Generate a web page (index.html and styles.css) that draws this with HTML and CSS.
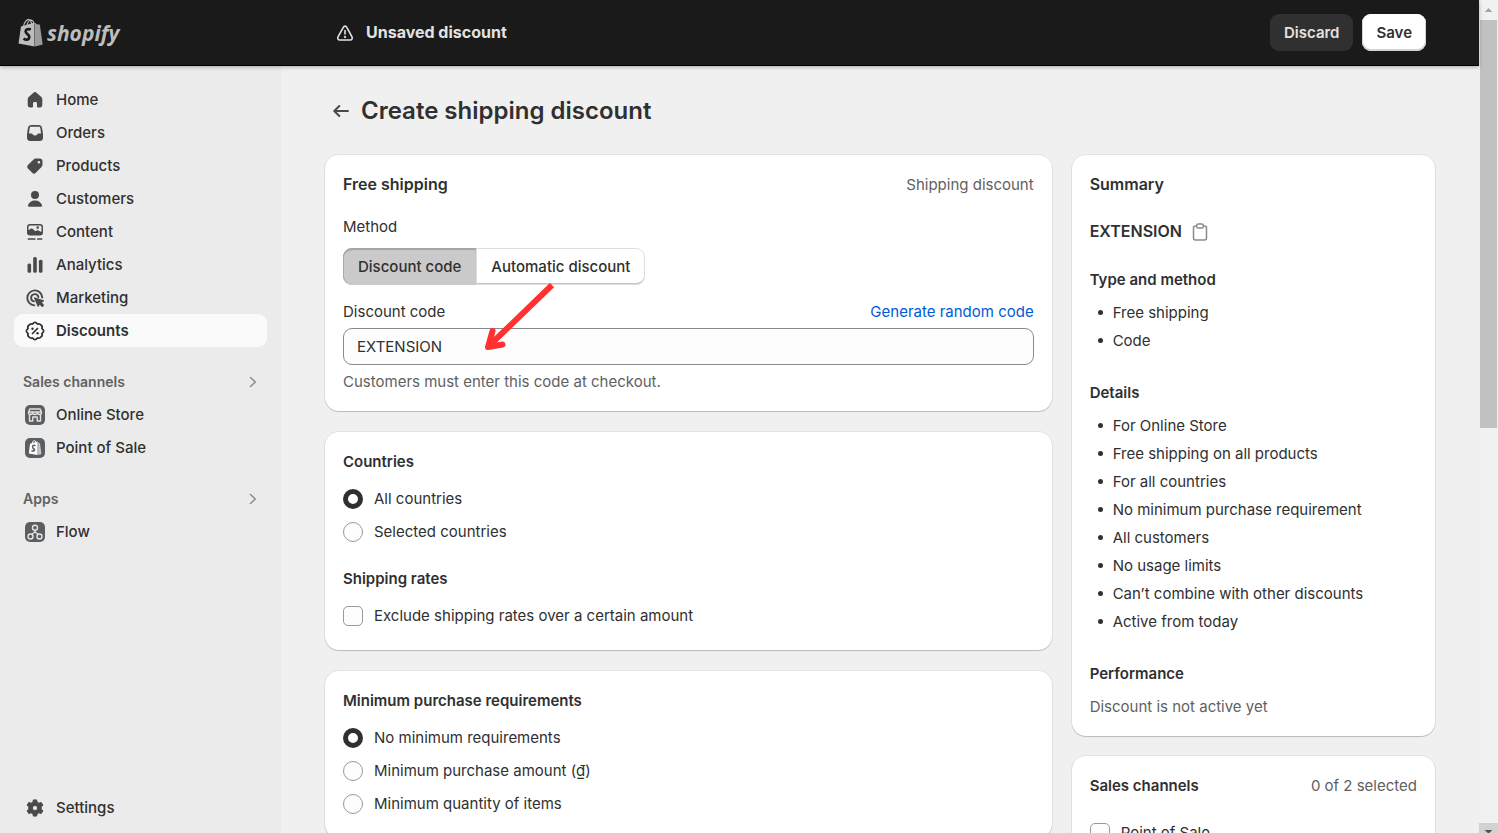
FILE: index.html
```html
<!DOCTYPE html>
<html lang="en">
<head>
<meta charset="utf-8">
<title>Create shipping discount</title>
<link rel="stylesheet" href="styles.css">
</head>
<body>
<div class="app">
  <header class="topbar">
    <a class="logo" href="#" aria-label="Shopify">
      <svg class="logo-bag" viewBox="0 0 25 29" aria-hidden="true">
        <path d="M5.500 8.500C6.200 4 9 1.200 11 1.500C12.800 1.800 13.500 4 13.500 7M9 7.500C9.500 4 11.500 2 13.200 2.200C15 2.500 15.800 4.500 16 6.500" fill="none" stroke="#bdbdbd" stroke-width="1.200"/>
        <path d="M3 8.600L16.500 4.600V28.500L.5 25.500Z" fill="#bdbdbd"/>
        <path d="M17 4.800L18.800 6.200L21.800 6.600L24.700 26.600L17 28.500Z" fill="#9c9c9c"/>
        <path d="M12.800 11.600C10.500 10.400 7.600 11.200 7.600 13.600C7.600 16.200 11.600 16.200 11.300 19.200C11 22 7.800 22.300 5.600 20.400" fill="none" stroke="#1a1a1a" stroke-width="2.700"/>
      </svg>
      <span>shopify</span>
    </a>
    <div class="save-bar">
      <div class="save-status">
        <svg class="warn" viewBox="0 0 18 18" fill="none" stroke="#e3e3e3" stroke-width="1.600" stroke-linecap="round" stroke-linejoin="round" aria-hidden="true"><path d="M7.300 3.300C8 1.700 10 1.700 10.800 3.300L16 12.800C16.700 14.500 15.900 16 14.200 16H3.800C2.100 16 1.300 14.500 2 12.800ZM9 6.500V10"/><circle cx="9" cy="12.900" r=".4"/></svg>
        <span>Unsaved discount</span>
      </div>
      <div class="save-actions">
        <button class="btn-dark" type="button">Discard</button>
        <button class="btn-light" type="button">Save</button>
      </div>
    </div>
  </header>

  <div class="body">
    <nav class="sidebar" aria-label="Main">
      <a class="nav-item" href="#"><svg class="ico" viewBox="0 0 20 20"><path d="M8.700 2.600Q10 1.500 11.300 2.600L16.300 7Q17.300 8 17.300 9.300V15.300Q17.300 17.400 15.200 17.400H13Q12 17.400 12 16.400V13.500Q12 12 10.900 12H9.100Q8 12 8 13.500V16.400Q8 17.400 7 17.400H4.800Q2.700 17.400 2.700 15.300V9.300Q2.700 8 3.700 7Z"/></svg>Home</a>
      <a class="nav-item" href="#"><svg class="ico" viewBox="0 0 20 20"><path fill-rule="evenodd" d="M6 2H14Q16.500 2 17 4.500L18 11V14.500Q18 18 14.500 18H5.500Q2 18 2 14.500V11L3 4.500Q3.500 2 6 2ZM6 3.700Q4.900 3.700 4.700 4.800L4 10.500H6.500Q7.300 10.500 7.800 11.400Q8.300 12.500 10 12.500T12.200 11.400Q12.700 10.500 13.500 10.500H16L15.300 4.800Q15.100 3.700 14 3.700Z"/></svg>Orders</a>
      <a class="nav-item" href="#"><svg class="ico" viewBox="0 0 20 20"><path fill-rule="evenodd" d="M10.600 2.500H14.500Q17.500 2.500 17.500 5.500V8.600Q17.500 9.800 16.500 10.900L10.800 16.800Q9 18.500 7.200 16.800L2.900 12.600Q1.300 10.800 2.900 9L8.600 3.400Q9.500 2.500 10.600 2.500ZM13.900 4.900A1.300 1.300 0 1 0 13.900 7.500A1.300 1.300 0 1 0 13.900 4.900Z"/></svg>Products</a>
      <a class="nav-item" href="#"><svg class="ico" viewBox="0 0 20 20"><circle cx="10" cy="6" r="4"/><path d="M10 11.500C13.800 11.500 16.300 13.600 17 16.300Q17.200 17.700 16 17.700H4Q2.800 17.700 3 16.300C3.700 13.600 6.200 11.500 10 11.500Z"/></svg>Customers</a>
      <a class="nav-item" href="#"><svg class="ico" viewBox="0 0 20 20"><path fill-rule="evenodd" d="M5 2H15Q18 2 18 5V10.500Q18 13.500 15 13.500H5Q2 13.500 2 10.500V5Q2 2 5 2ZM5 3.500Q3.500 3.500 3.500 5V8.300L5.600 6.700Q6.800 6 7.900 6.900L10.300 9.300L11.600 8.500Q12.800 7.800 13.900 8.700L16.500 10V5Q16.500 3.500 15 3.500ZM12.700 4.300A1.300 1.300 0 1 1 12.700 6.900A1.300 1.300 0 1 1 12.700 4.300Z"/><path d="M3.500 17H9.800M12.800 17H16.600" stroke="currentColor" stroke-width="1.700" stroke-linecap="round"/></svg>Content</a>
      <a class="nav-item" href="#"><svg class="ico" viewBox="0 0 20 20"><rect x="2.500" y="8.500" width="3.600" height="9.200" rx="1.500"/><rect x="8.200" y="2" width="3.600" height="15.700" rx="1.500"/><rect x="13.900" y="4.800" width="3.600" height="12.900" rx="1.500"/></svg>Analytics</a>
      <a class="nav-item" href="#"><svg class="ico" viewBox="0 0 20 20"><path d="M17.300 9.500A7.500 7.500 0 1 0 9.300 17.400M13.400 9A3.700 3.700 0 1 0 9 13.400" fill="none" stroke="currentColor" stroke-width="1.900" stroke-linecap="round"/><path d="M9.500 9.200L18.700 12.300Q19.600 12.900 18.600 13.500L16.900 14.400L18.900 16.700Q19.200 17.800 17.800 18.900Q17.100 19.300 16.500 18.600L14.700 16.700L13.700 18.500Q13 19.300 12.500 18.300L9 10Q8.900 9.200 9.500 9.200Z"/></svg>Marketing</a>
      <a class="nav-item active" href="#" aria-current="page"><svg class="ico" viewBox="0 0 20 20"><path d="M10 1.300Q11.200 1.300 12.400 3Q14.900 2.300 15.900 4.100Q17.700 5.100 17 7.600Q18.700 8.800 18.700 10T17 12.400Q17.700 14.900 15.900 15.900Q14.900 17.700 12.400 17Q11.200 18.700 10 18.700T7.600 17Q5.100 17.700 4.100 15.900Q2.300 14.900 3 12.400Q1.300 11.200 1.300 10T3 7.600Q2.300 5.100 4.100 4.100Q5.100 2.300 7.600 3Q8.800 1.300 10 1.300ZM7.500 12.500L12.500 7.500" fill="none" stroke="currentColor" stroke-width="1.700" stroke-linecap="round"/><circle cx="7.500" cy="7.700" r="1.200"/><circle cx="12.500" cy="12.300" r="1.200"/></svg>Discounts</a>

      <a class="nav-heading" href="#">Sales channels<svg class="chev" viewBox="0 0 8 12"><path d="M1.500 1.500L6.300 6L1.500 10.500"/></svg></a>
      <a class="nav-item" href="#"><svg class="ico" viewBox="0 0 20 20"><rect width="20" height="20" rx="5" fill="#5c5f62"/><path d="M4.500 9.500V16H7.800V12H12.200V16H15.500V9.500M4.800 4H15.200L16.500 7.500Q16.500 9.500 14.700 9.500T12.500 8Q12 9.500 10 9.500T7.500 8Q7 9.500 5.300 9.500T3.500 7.500ZM3.700 7H16.300" fill="none" stroke="#e3e3e3" stroke-width="1.400" stroke-linejoin="round"/></svg>Online Store</a>
      <a class="nav-item" href="#"><svg class="ico" viewBox="0 0 20 20"><rect width="20" height="20" rx="5" fill="#5c5f62"/><path d="M5 5.800L12.600 3.500V17L3.800 15.600Z" fill="#fff"/><path d="M13.200 4L15 5.500L16.400 16L13.200 17Z" fill="#c9cacb"/><path d="M7 5.500Q8 2.500 9.500 2.700T11 4.500" fill="none" stroke="#fff"/><path d="M10.500 7.700Q7.500 6.700 7.500 8.500T9.600 11.500Q9.500 13.800 6.400 12.700" fill="none" stroke="#5c5f62" stroke-width="1.500"/></svg>Point of Sale</a>

      <a class="nav-heading" href="#">Apps<svg class="chev" viewBox="0 0 8 12"><path d="M1.500 1.500L6.300 6L1.500 10.500"/></svg></a>
      <a class="nav-item" href="#"><svg class="ico" viewBox="0 0 20 20"><rect width="20" height="20" rx="5" fill="#5c5f62"/><g fill="none" stroke="#e3e3e3" stroke-width="1.400"><circle cx="10" cy="5.700" r="2.500"/><circle cx="5.500" cy="14.500" r="2.500"/><circle cx="14.500" cy="14.500" r="2.500"/><path d="M10 8.200V10L6.800 12.300M10 10L13.200 12.300"/></g></svg>Flow</a>

      <a class="nav-item settings" href="#"><svg class="ico" viewBox="0 0 20 20"><path fill-rule="evenodd" d="M8.400 1.900H11.600L12.100 4.200L13.900 5.200L16.200 4.400L17.900 7.200L16.200 8.900V11.100L17.900 12.800L16.200 15.600L13.900 14.800L12.100 15.800L11.600 18.100H8.400L7.900 15.800L6.100 14.800L3.800 15.600L2.100 12.800L3.800 11.100V8.900L2.100 7.200L3.800 4.400L6.100 5.200L7.900 4.200ZM10 7.400A2.600 2.600 0 1 0 10 12.600A2.600 2.600 0 1 0 10 7.400Z" stroke="currentColor" stroke-linejoin="round"/></svg>Settings</a>
    </nav>

    <main class="main">
      <div class="page-title">
        <a class="back" href="#" aria-label="Back"><svg viewBox="0 0 16 14"><path d="M15 7H1.500M6.300 2L1.300 7L6.300 12"/></svg></a>
        <h1>Create shipping discount</h1>
      </div>

      <div class="columns">
        <form class="column form-column">
          <section class="card">
            <div class="card-head"><h2 class="lead">Free shipping</h2><span class="muted">Shipping discount</span></div>
            <div class="method">Method</div>
            <div class="segmented">
              <button class="pressed" type="button" aria-pressed="true">Discount code</button>
              <button type="button" aria-pressed="false">Automatic discount</button>
            </div>
            <div class="label-row">
              <label for="code">Discount code</label>
              <a class="link" href="#">Generate random code</a>
            </div>
            <input class="text-input" id="code" type="text" value="EXTENSION">
            <p class="help muted">Customers must enter this code at checkout.</p>
            <svg class="pointer" viewBox="0 0 72 70" aria-hidden="true"><path d="M68 2L7 61" fill="none" stroke="#ff3131" stroke-width="6"/><path d="M8.500 48L4 64L18.500 61.500" fill="none" stroke="#ff3131" stroke-width="6" stroke-linecap="round" stroke-linejoin="round"/></svg>
          </section>

          <section class="card">
            <h2>Countries</h2>
            <div class="choices">
              <label class="choice"><input type="radio" name="country" checked>All countries</label>
              <label class="choice"><input type="radio" name="country">Selected countries</label>
            </div>
            <h3 class="rates">Shipping rates</h3>
            <div class="choices">
              <label class="choice"><input type="checkbox">Exclude shipping rates over a certain amount</label>
            </div>
          </section>

          <section class="card">
            <h2>Minimum purchase requirements</h2>
            <div class="choices">
              <label class="choice"><input type="radio" name="minimum" checked>No minimum requirements</label>
              <label class="choice"><input type="radio" name="minimum">Minimum purchase amount (₫)</label>
              <label class="choice"><input type="radio" name="minimum">Minimum quantity of items</label>
            </div>
          </section>
        </form>

        <aside class="column">
          <section class="card">
            <h2 class="lead">Summary</h2>
            <div class="code-line"><strong>EXTENSION</strong>
              <button class="copy" type="button" aria-label="Copy code"><svg viewBox="0 0 16 18"><rect x="1.500" y="3" width="13" height="14" rx="2"/><rect x="4.700" y="1" width="6.600" height="4" rx="1.600" fill="#fff"/></svg></button>
            </div>
            <h3>Type and method</h3>
            <ul class="bullets"><li>Free shipping</li><li>Code</li></ul>
            <h3>Details</h3>
            <ul class="bullets">
              <li>For Online Store</li><li>Free shipping on all products</li><li>For all countries</li><li>No minimum purchase requirement</li><li>All customers</li><li>No usage limits</li><li>Can’t combine with other discounts</li><li>Active from today</li>
            </ul>
            <h3>Performance</h3>
            <p class="status muted">Discount is not active yet</p>
          </section>
          <section class="card">
            <div class="card-head"><h2>Sales channels</h2><span class="muted">0 of 2 selected</span></div>
            <div class="channels"><label class="choice"><input type="checkbox">Point of Sale</label></div>
          </section>
        </aside>
      </div>
    </main>
  </div>
</div>
<div class="scrollbar" aria-hidden="true">
  <svg class="scroll-up" viewBox="0 0 20 20"><path d="M6 12L10 8L14 12Z" fill="#a3a3a3"/></svg>
  <div class="thumb"></div>
  <svg class="scroll-down" viewBox="0 0 20 10"><path d="M6 7H14L10 11Z" fill="#505050"/></svg>
</div>
</body>
</html>
```
FILE: styles.css
```css
* { box-sizing: border-box; }
body {
  margin: 0;
  height: 100vh;
  overflow: hidden;
  display: flex;
  background: #f0f0f0;
  color: #303030;
  font: 15px/23px Inter, "Liberation Sans", sans-serif;
}
a { color: inherit; text-decoration: none; }
button, input { font: inherit; color: inherit; margin: 0; }
h1, h2, h3, p, ul { margin: 0; padding: 0; }
h2, h3 { font-size: 15px; line-height: 23px; font-weight: 600; }
.lead { font-size: 16px; }
.muted { color: #616161; }

.app { flex: 1; min-width: 0; display: flex; flex-direction: column; }

.topbar {
  position: relative;
  flex: none;
  height: 66px;
  display: flex;
  align-items: center;
  background: #1a1a1a;
  border-bottom: 1px solid #000;
  box-shadow: 0 1px 4px rgba(0, 0, 0, .3);
}
.logo {
  width: 281px;
  padding-left: 18px;
  display: flex;
  align-items: center;
  gap: 4px;
  color: #bdbdbd;
  font: italic 700 21px/30px "Open Sans", "Noto Sans", sans-serif;
}
.logo-bag { width: 25px; height: 29px; }
.save-bar {
  flex: 1;
  display: flex;
  align-items: center;
  justify-content: space-between;
  padding: 0 53px 0 55px;
}
.save-status { display: flex; align-items: center; gap: 12px; color: #e3e3e3; font-size: 16px; font-weight: 700; }
.warn { width: 18px; height: 18px; }
.save-actions { display: flex; gap: 9px; }
.save-actions button { height: 37px; padding: 0 14px; border: 0; border-radius: 9px; font-weight: 600; }
.btn-dark { background: #303030; color: #e3e3e3; }
.btn-light { background: #fff; box-shadow: inset 0 -1px 0 1px #d4d4d4, inset 0 1px 0 #fff; }

.body { flex: 1; min-height: 0; display: flex; }
.sidebar {
  flex: none;
  width: 281px;
  padding: 17px 14px 9px;
  display: flex;
  flex-direction: column;
  background: #ebebeb;
}
.nav-item {
  height: 33px;
  padding: 0 11px;
  display: flex;
  align-items: center;
  gap: 11px;
  border-radius: 9px;
  font-weight: 500;
}
.nav-item.active { background: #fafafa; font-weight: 600; }
.ico { width: 20px; height: 20px; color: #4a4a4a; fill: currentColor; }
.active .ico { color: #303030; }
.nav-heading {
  height: 33px;
  margin-top: 18px;
  padding: 0 10px 0 9px;
  display: flex;
  align-items: center;
  justify-content: space-between;
  color: #616161;
  font-size: 14px;
  font-weight: 600;
}
.chev { width: 8px; height: 12px; fill: none; stroke: #8a8a8a; stroke-width: 1.5; stroke-linecap: round; stroke-linejoin: round; }
.settings { margin-top: auto; }

.main { flex: 1; min-width: 0; overflow: hidden; padding: 28px 44px 20px; }
.page-title { display: flex; align-items: center; gap: 12px; padding-left: 8px; margin-bottom: 28px; }
.back { display: flex; }
.back svg { width: 16px; height: 14px; fill: none; stroke: #4a4a4a; stroke-width: 2; stroke-linecap: round; stroke-linejoin: round; }
h1 { font-size: 24px; line-height: 33px; font-weight: 600; }

.columns { display: grid; grid-template-columns: 2fr 1fr; gap: 20px; align-items: start; }
.column { display: flex; flex-direction: column; gap: 20px; min-width: 0; }
.form-column { gap: 21px; }
.card {
  position: relative;
  padding: 18px;
  background: #fff;
  border-radius: 14px;
  box-shadow: 0 1px 1px rgba(0, 0, 0, .18), 0 0 0 1px rgba(0, 0, 0, .05);
}
.card-head, .label-row { display: flex; justify-content: space-between; }

.method { margin: 19px 0 10px; }
.segmented { display: inline-flex; vertical-align: top; }
.segmented button {
  height: 37px;
  padding: 0 15px;
  border: 0;
  background: #fff;
  border-radius: 0 9px 9px 0;
  font-weight: 500;
  box-shadow: inset 0 0 0 1px #dedede, inset 0 -2px 0 #c4c4c4;
}
.segmented .pressed {
  background: #cacaca;
  border-radius: 9px 0 0 9px;
  box-shadow: inset 1px 0 0 #a8a8a8, inset 0 2px 1px #a3a3a3;
}
.label-row { margin: 15px 0 5px; }
.link { color: #005bd3; }
.text-input {
  display: block;
  width: 100%;
  height: 37px;
  padding: 0 13px;
  border: 1px solid #8a8a8a;
  border-radius: 9px;
  background: #fdfdfd;
}
.help { margin-top: 5px; }
.pointer { position: absolute; left: 159px; top: 128px; width: 72px; height: 70px; }

.choices { margin-top: 9px; }
.choice { height: 33px; display: flex; align-items: center; gap: 11px; }
.choice input {
  appearance: none;
  flex: none;
  width: 20px;
  height: 20px;
  border: 1px solid #999;
  border-radius: 5px;
  background: #fdfdfd;
}
.choice input[type="radio"] { border-radius: 50%; }
.choice input[type="radio"]:checked { border: 5px solid #303030; background: #fff; }
.rates { margin-top: 19px; }

.code-line { display: flex; align-items: center; gap: 10px; margin: 24px 0 25px; font-size: 16px; }
.code-line strong { font-weight: 600; }
.copy { display: flex; padding: 0; border: 0; background: none; }
.copy svg { width: 16px; height: 18px; fill: none; stroke: #8a8a8a; stroke-width: 1.5; }
.bullets { list-style: none; margin: 10px 0 29px; display: flex; flex-direction: column; gap: 5px; }
.bullets li { display: flex; align-items: center; gap: 10px; padding-left: 8px; }
.bullets li::before { content: ""; width: 5px; height: 5px; border-radius: 50%; background: #303030; }
.status { margin-top: 10px; }
.channels { margin-top: 19px; }

.scrollbar { flex: none; width: 19px; display: flex; flex-direction: column; background: #f1f1f1; }
.scroll-up { width: 19px; height: 20px; }
.thumb { height: 49%; margin: 0 1px; background: #c1c1c1; }
.scroll-down { width: 19px; height: 10px; margin-top: auto; background: #d2d2d2; }
```
